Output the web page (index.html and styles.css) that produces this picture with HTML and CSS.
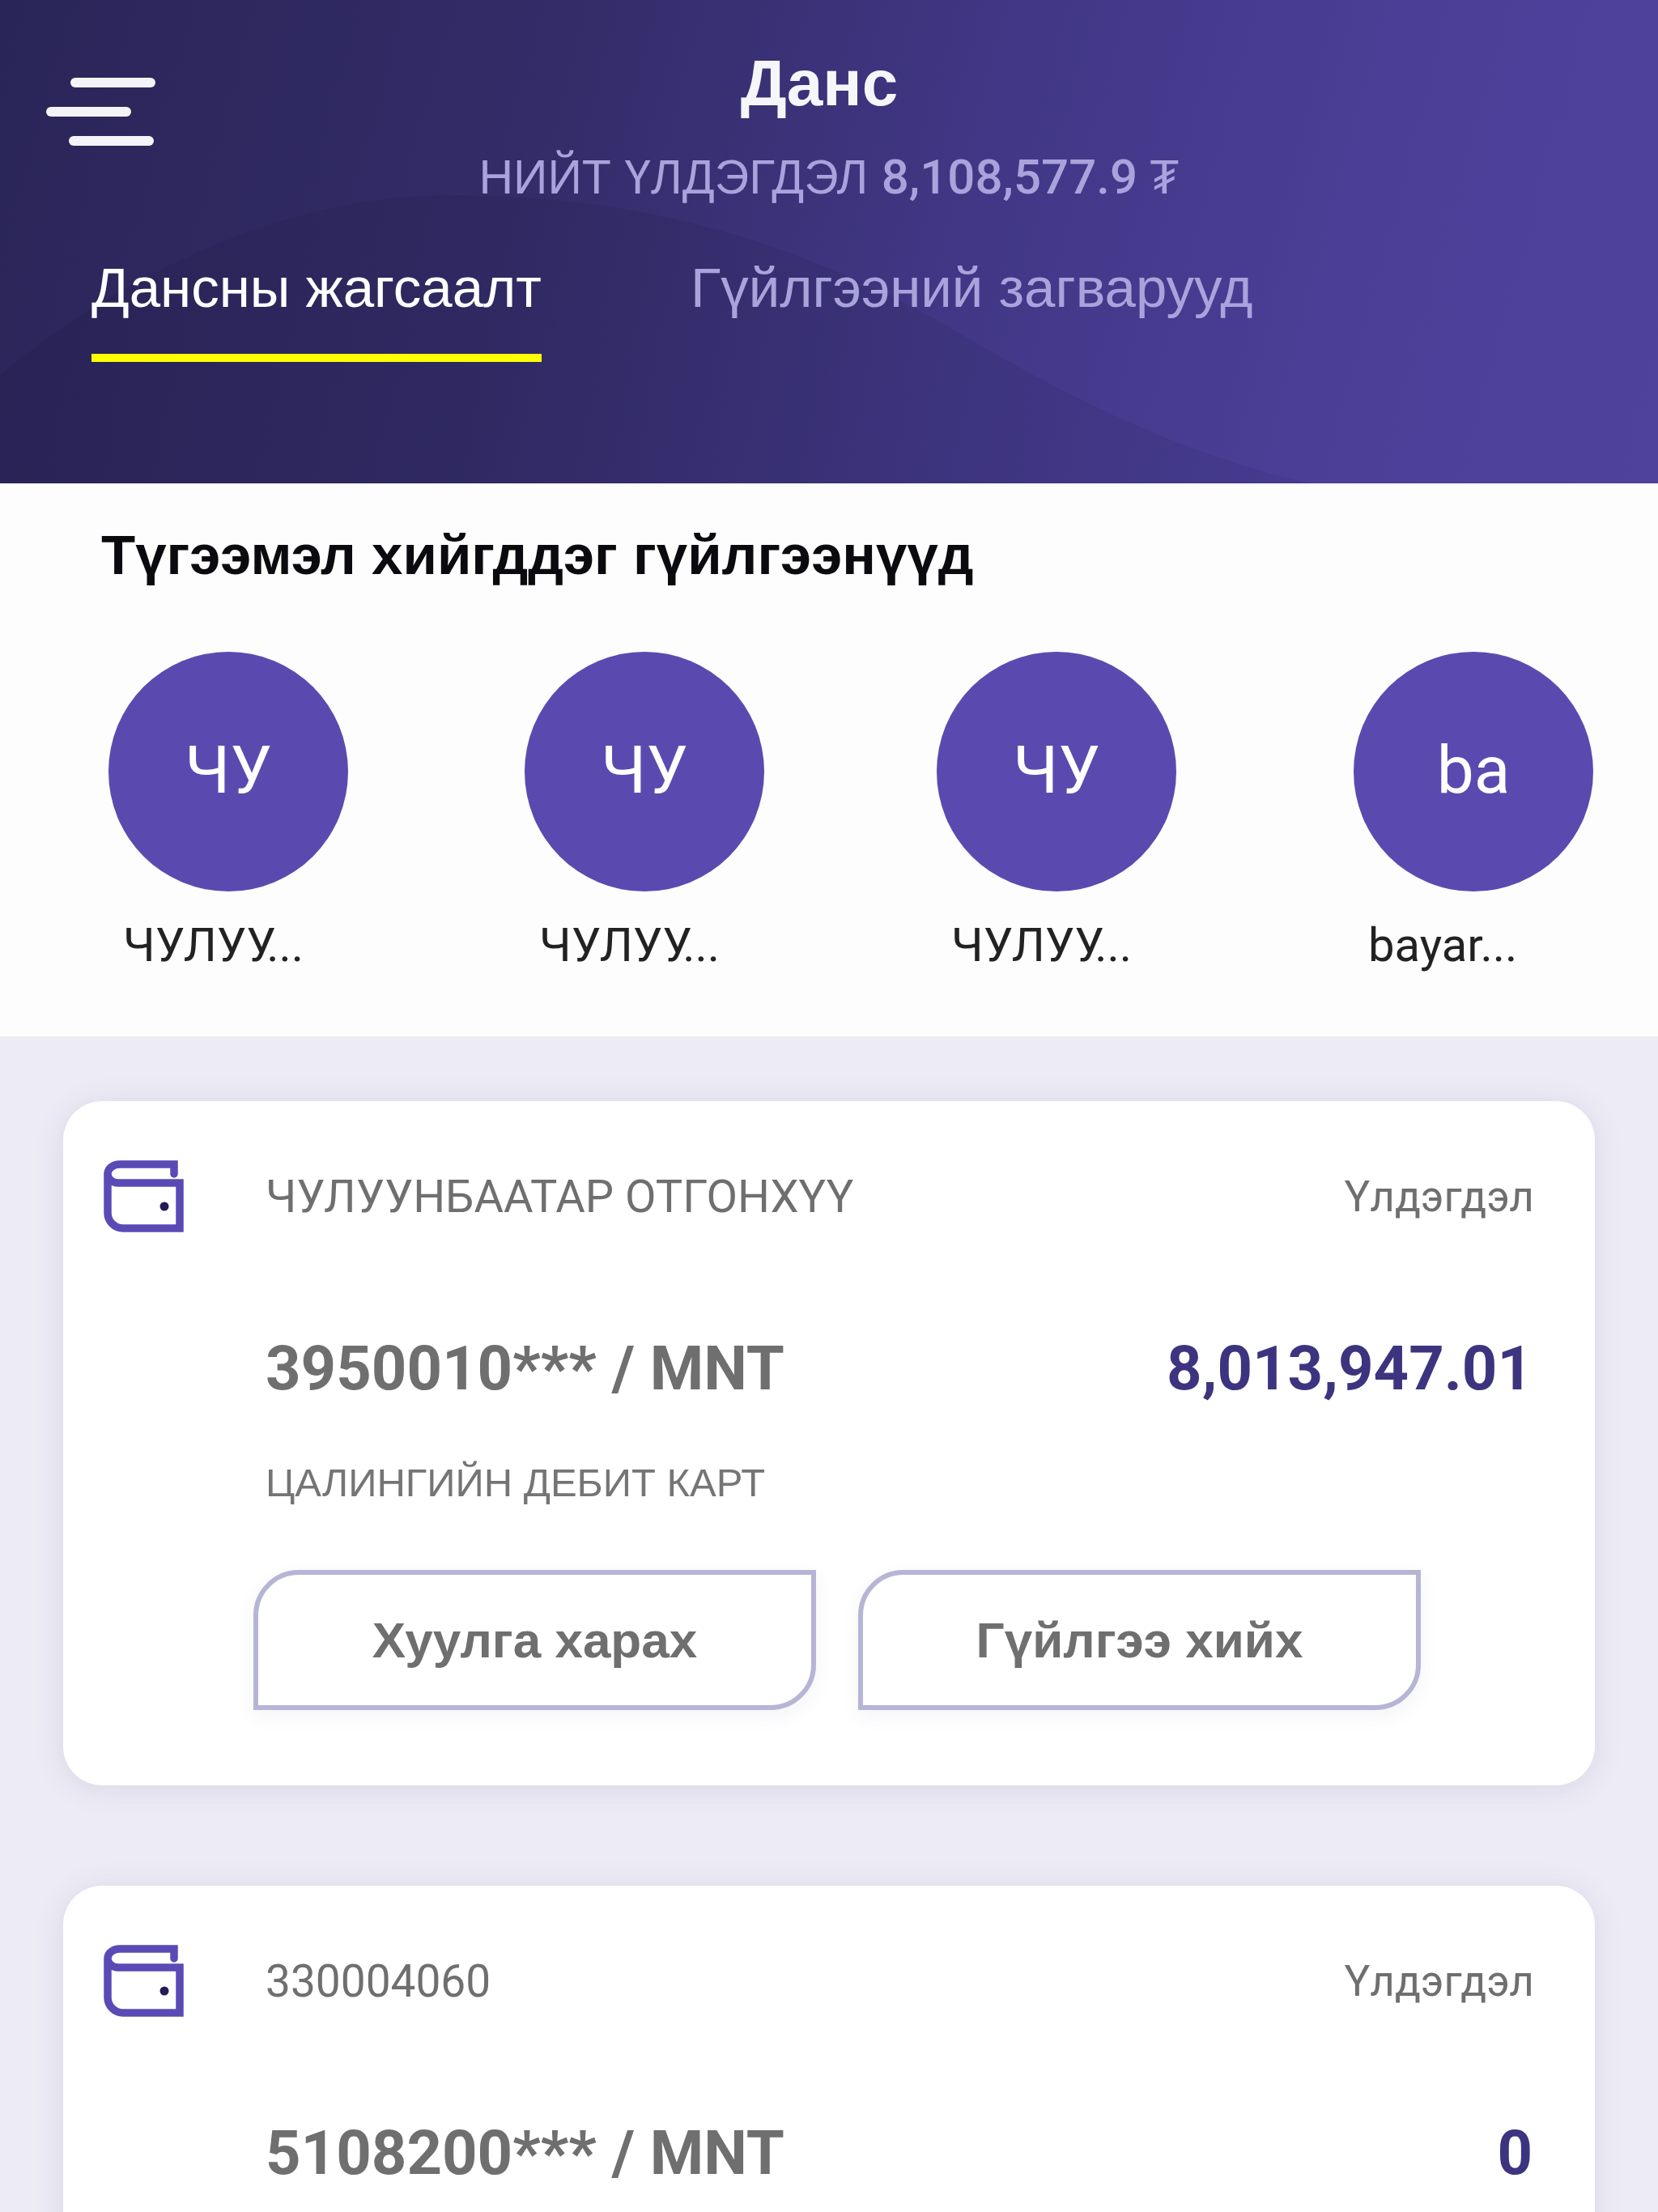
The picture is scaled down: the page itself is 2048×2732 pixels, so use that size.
FILE: index.html
```html
<!DOCTYPE html>
<html lang="mn">
<head>
<meta charset="utf-8">
<title>Данс</title>
<link rel="stylesheet" href="styles.css">
</head>
<body>
<div class="page">
  <header class="header">
    <svg class="waves" viewBox="0 0 2048 597" preserveAspectRatio="none" aria-hidden="true">
      <defs>
        <linearGradient id="hump" x1="0" y1="0" x2="1" y2="0">
          <stop offset="0" stop-color="#241f4e" stop-opacity=".4"/>
          <stop offset=".55" stop-color="#2a2558" stop-opacity=".28"/>
          <stop offset="1" stop-color="#3c3480" stop-opacity=".3"/>
        </linearGradient>
      </defs>
      <path d="M0 463C150 340 350 241 555 241C800 241 980 300 1155 394C1300 480 1450 560 1620 597H0Z" fill="url(#hump)"/>
    </svg>
    <div class="topbar">
      <button class="menu" aria-label="Цэс">
        <span class="bar bar-top"></span>
        <span class="bar bar-mid"></span>
        <span class="bar bar-bottom"></span>
      </button>
      <div class="heading">
        <h1 class="title">Данс</h1>
        <p class="total">НИЙТ ҮЛДЭГДЭЛ <b>8,108,577.9 ₮</b></p>
      </div>
    </div>
    <nav class="tabs">
      <a class="tab tab-active">Дансны жагсаалт</a>
      <a class="tab">Гүйлгээний загварууд</a>
    </nav>
  </header>

  <section class="frequent">
    <h2 class="frequent-title">Түгээмэл хийгддэг гүйлгээнүүд</h2>
    <div class="contacts">
      <div class="contact"><div class="avatar">ЧУ</div><div class="contact-name">ЧУЛУУ...</div></div>
      <div class="contact"><div class="avatar">ЧУ</div><div class="contact-name">ЧУЛУУ...</div></div>
      <div class="contact"><div class="avatar">ЧУ</div><div class="contact-name">ЧУЛУУ...</div></div>
      <div class="contact"><div class="avatar">ba</div><div class="contact-name">bayar...</div></div>
    </div>
  </section>

  <main class="accounts">
    <article class="card">
      <div class="card-head">
        <svg class="wallet" viewBox="0 0 100 89" aria-hidden="true">
          <path d="M87 17V5H20A15 12 0 0 0 5 16V65A19 19 0 0 0 24 84H94V28H18A13 11.5 0 0 1 5 16" fill="none" stroke="#5a4ab5" stroke-width="9.5" stroke-linecap="round"/>
          <circle cx="75" cy="57" r="5.5" fill="#241c55"/>
        </svg>
        <span class="owner">ЧУЛУУНБААТАР ОТГОНХҮҮ</span>
        <span class="balance-label">Үлдэгдэл</span>
      </div>
      <div class="card-main">
        <span class="account-no">3950010*** / MNT</span>
        <span class="amount">8,013,947.01</span>
      </div>
      <div class="account-type">ЦАЛИНГИЙН ДЕБИТ КАРТ</div>
      <div class="actions">
        <button class="action">Хуулга харах</button>
        <button class="action">Гүйлгээ хийх</button>
      </div>
    </article>

    <article class="card">
      <div class="card-head">
        <svg class="wallet" viewBox="0 0 100 89" aria-hidden="true">
          <path d="M87 17V5H20A15 12 0 0 0 5 16V65A19 19 0 0 0 24 84H94V28H18A13 11.5 0 0 1 5 16" fill="none" stroke="#5a4ab5" stroke-width="9.5" stroke-linecap="round"/>
          <circle cx="75" cy="57" r="5.5" fill="#241c55"/>
        </svg>
        <span class="owner owner-id">330004060</span>
        <span class="balance-label">Үлдэгдэл</span>
      </div>
      <div class="card-main">
        <span class="account-no">5108200*** / MNT</span>
        <span class="amount">0</span>
      </div>
    </article>
  </main>
</div>
</body>
</html>
```

FILE: styles.css
```css
* { box-sizing: border-box; }

html, body {
  margin: 0;
  padding: 0;
}

body {
  font-family: Roboto, "Noto Sans", sans-serif;
  background: #edecf5;
}

.page {
  width: 2048px;
  height: 2732px;
  overflow: hidden;
}

/* Header */
.header {
  position: relative;
  height: 597px;
  overflow: hidden;
  background: linear-gradient(105deg, #2a2558 0%, #332c68 32%, #413786 58%, #4b3f98 82%, #4f429d 100%);
  padding: 60px 0 0;
}

.waves {
  position: absolute;
  inset: 0;
  width: 100%;
  height: 100%;
}

.topbar {
  position: relative;
  display: grid;
  grid-template-columns: 1fr auto 1fr;
}

.menu {
  display: flex;
  flex-direction: column;
  width: 136px;
  height: 84px;
  margin: 36px 0 0 57px;
  padding: 0;
  border: 0;
  background: none;
  gap: 24px;
}

.bar {
  display: block;
  width: 105px;
  height: 12px;
  border-radius: 6px;
  background: #f4f4f8;
}

.bar-top { margin-left: 30px; }
.bar-bottom { margin-left: 28px; }

.heading {
  grid-column: 2;
  text-align: center;
}

.title {
  margin: 0;
  padding-right: 24px;
  color: #f6f6fa;
  font-family: "Liberation Sans", sans-serif;
  font-size: 80px;
  font-weight: 700;
  line-height: 86px;
}

.total {
  margin: 38px 0 0;
  color: #a9a3dc;
  font-family: "Liberation Sans", sans-serif;
  font-size: 59px;
  line-height: 70px;
}

.total b {
  font-family: Roboto, sans-serif;
  font-size: 60px;
  font-weight: 500;
}

.tabs {
  position: relative;
  display: flex;
  gap: 184px;
  margin: 62px 0 0 113px;
}

.tab {
  height: 131px;
  color: #a9a3dc;
  font-family: "Liberation Sans", sans-serif;
  font-size: 69px;
  line-height: 80px;
}

.tab-active {
  color: #fff;
  border-bottom: 10px solid #ff0;
}

/* Frequent transfers */
.frequent {
  height: 683px;
  padding: 54px 0 0 125px;
  background: #fdfdfd;
}

.frequent-title {
  margin: 0;
  color: #0b0b0f;
  font-family: "Liberation Sans", sans-serif;
  font-size: 69px;
  font-weight: 700;
  line-height: 70px;
}

.contacts {
  display: grid;
  grid-template-columns: 514px 509px 515px 296px;
  margin: 84px 0 0 9px;
}

.avatar {
  display: flex;
  align-items: center;
  justify-content: center;
  width: 296px;
  height: 296px;
  padding-bottom: 4px;
  border-radius: 50%;
  background: #5a4ab0;
  color: #fff;
  font-size: 82px;
}

.contact-name {
  margin: 33px 0 0 18px;
  color: #222;
  font-size: 58px;
  line-height: 66px;
}

/* Accounts */
.accounts {
  padding: 80px 78px 0;
  display: flex;
  flex-direction: column;
  gap: 124px;
}

.card {
  flex: none;
  height: 845px;
  padding: 73px 75px 0 50px;
  border-radius: 48px;
  background: #fff;
  box-shadow: 0 4px 36px rgba(70, 60, 140, 0.13);
}

.card-head {
  display: flex;
  align-items: center;
  height: 89px;
}

.wallet {
  flex: none;
  width: 100px;
  height: 89px;
  margin-right: 100px;
}

.owner {
  flex: 1;
  color: #6f6f6f;
  font-size: 56px;
}

.owner-id { font-size: 55px; }

.balance-label {
  color: #6f6f6f;
  font-size: 53px;
}

.card-main {
  display: flex;
  justify-content: space-between;
  align-items: center;
  margin: 123px 2px 0 200px;
  font-size: 76px;
  font-weight: 700;
  line-height: 90px;
}

.account-no { color: #6f6f6f; }
.amount { color: #3d3480; }

.account-type {
  margin: 65px 0 0 200px;
  color: #757575;
  font-family: "Liberation Sans", sans-serif;
  font-size: 49px;
  line-height: 62px;
}

.actions {
  display: flex;
  gap: 52px;
  margin: 77px 0 0 185px;
}

.action {
  width: 695px;
  height: 173px;
  border: 6px solid #b6b5d5;
  border-radius: 56px 0 56px 0;
  background: #fff;
  box-shadow: 0 8px 24px rgba(70, 60, 140, 0.06);
  color: #6f6f6f;
  font-family: "Liberation Sans", sans-serif;
  font-size: 62px;
  font-weight: 700;
}
```
